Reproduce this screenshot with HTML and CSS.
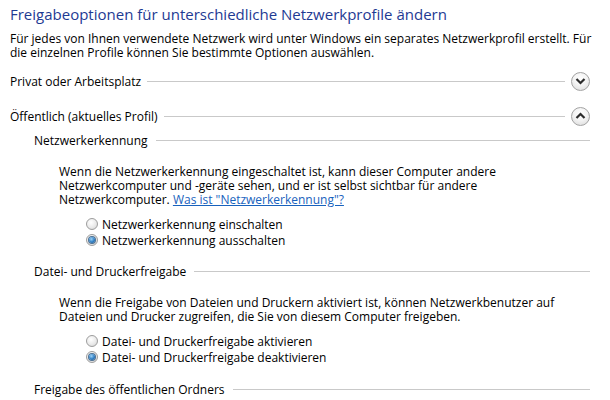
FILE: index.html
```html
<!DOCTYPE html>
<html lang="de">
<head>
<meta charset="utf-8">
<title>Erweiterte Freigabeeinstellungen</title>
<link rel="stylesheet" href="styles.css">
</head>
<body>
<div class="page">
  <h1 class="title">Freigabeoptionen für unterschiedliche Netzwerkprofile ändern</h1>
  <p class="intro">Für jedes von Ihnen verwendete Netzwerk wird unter Windows ein separates Netzwerkprofil erstellt. Für die einzelnen Profile können Sie bestimmte Optionen auswählen.</p>

  <div class="profile">
    <span class="profile-name">Privat oder Arbeitsplatz</span>
    <span class="rule"></span>
    <span class="toggle">
      <svg width="11" height="8" viewBox="0 0 11 8"><polyline points="1.5,2 5.5,6 9.5,2" fill="none" stroke="#2b2b2b" stroke-width="2.2"/></svg>
    </span>
  </div>

  <div class="profile profile-open">
    <span class="profile-name">Öffentlich (aktuelles Profil)</span>
    <span class="rule"></span>
    <span class="toggle">
      <svg width="11" height="8" viewBox="0 0 11 8"><polyline points="1.5,6 5.5,2 9.5,6" fill="none" stroke="#2b2b2b" stroke-width="2.2"/></svg>
    </span>
  </div>

  <div class="section">
    <div class="section-head"><span>Netzwerkerkennung</span><span class="rule"></span></div>
    <p class="desc">Wenn die Netzwerkerkennung eingeschaltet ist, kann dieser Computer andere Netzwerkcomputer und -geräte sehen, und er ist selbst sichtbar für andere Netzwerkcomputer. <a class="link" href="#">Was ist "Netzwerkerkennung"?</a></p>
    <div class="options">
      <div class="option"><span class="radio"></span><span>Netzwerkerkennung einschalten</span></div>
      <div class="option"><span class="radio checked"></span><span>Netzwerkerkennung ausschalten</span></div>
    </div>
  </div>

  <div class="section section-next">
    <div class="section-head"><span>Datei- und Druckerfreigabe</span><span class="rule"></span></div>
    <p class="desc">Wenn die Freigabe von Dateien und Druckern aktiviert ist, können Netzwerkbenutzer auf Dateien und Drucker zugreifen, die Sie von diesem Computer freigeben.</p>
    <div class="options">
      <div class="option"><span class="radio"></span><span>Datei- und Druckerfreigabe aktivieren</span></div>
      <div class="option"><span class="radio checked"></span><span>Datei- und Druckerfreigabe deaktivieren</span></div>
    </div>
  </div>

  <div class="section section-last">
    <div class="section-head"><span>Freigabe des öffentlichen Ordners</span><span class="rule"></span></div>
  </div>
</div>
</body>
</html>
```

FILE: styles.css
```css
html, body {
  margin: 0;
  padding: 0;
  background: #ffffff;
}
body {
  font-family: "Open Sans", "DejaVu Sans", sans-serif;
  font-size: 12px;
  color: #000000;
  overflow: hidden;
}
.page {
  width: 610px;
  height: 400px;
  box-sizing: border-box;
  padding: 4px 20px 0 10px;
}
.title {
  margin: 0;
  font-size: 15px;
  font-weight: normal;
  color: #1e3a93;
  line-height: 20px;
}
.intro {
  margin: 8px -12px 0 0;
  line-height: 14px;
}
.profile {
  display: flex;
  align-items: center;
  gap: 6px;
  margin-top: 9px;
  height: 24px;
}
.profile-open {
  margin-top: 11px;
}
.rule {
  flex: 1;
  height: 1px;
  background: #c9c9c9;
}
.toggle {
  width: 19px;
  height: 19px;
  box-sizing: border-box;
  border: 1px solid #a3a3a3;
  border-radius: 50%;
  background: radial-gradient(circle at 50% 35%, #ffffff 0%, #f4f4f4 45%, #d8d8d8 100%);
  display: flex;
  align-items: center;
  justify-content: center;
}
.section {
  padding-left: 24px;
}
.section-head {
  display: flex;
  align-items: center;
  gap: 8px;
  height: 16px;
  margin-top: 4px;
}
.section-next .section-head {
  margin-top: 15px;
}
.section-last .section-head {
  margin-top: 16px;
}
.desc {
  margin: 17px 15px 0 25px;
  line-height: 14px;
}
.link {
  color: #1862bd;
  text-decoration: underline;
}
.options {
  margin: 9px 0 0 52px;
  display: flex;
  flex-direction: column;
}
.option {
  display: flex;
  align-items: center;
  gap: 4px;
  height: 16px;
}
.radio {
  width: 12px;
  height: 12px;
  box-sizing: border-box;
  border-radius: 50%;
  border: 1px solid #9d9d9d;
  background: radial-gradient(circle at 40% 35%, #ffffff 0%, #eaeaea 55%, #cfcfcf 100%);
  display: flex;
  align-items: center;
  justify-content: center;
}
.radio.checked::after {
  content: "";
  width: 6px;
  height: 6px;
  border-radius: 50%;
  background: radial-gradient(circle at 40% 35%, #9fd3f7 0%, #2f7fc4 55%, #134a86 100%);
  box-shadow: 0 0 0 1px #4b6f92;
}
```
